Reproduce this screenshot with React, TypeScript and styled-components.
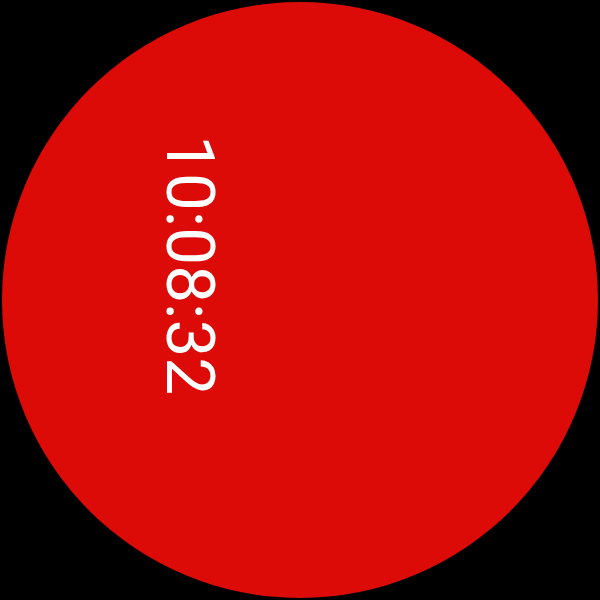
import React from "react";
import styled, { createGlobalStyle } from "styled-components";

const Global = createGlobalStyle`
  html, body { margin: 0; padding: 0; background: #000; }
`;

const Screen = styled.div`
  width: 600px;
  height: 600px;
  background: #000;
  padding: 2px;
  box-sizing: border-box;
`;

const Face = styled.div`
  width: 596px;
  height: 596px;
  border-radius: 50%;
  background: #dc0b07;
  display: flex;
  align-items: flex-start;
  padding: 133px 0 0 155px;
  box-sizing: border-box;
`;

const Time = styled.span`
  writing-mode: vertical-rl;
  font-family: Roboto, "Noto Sans", sans-serif;
  font-size: 67.5px;
  line-height: 66px;
  color: #fff;
`;

export default function App() {
  return (
    <>
      <Global />
      <Screen>
        <Face>
          <Time>10:08:32</Time>
        </Face>
      </Screen>
    </>
  );
}
